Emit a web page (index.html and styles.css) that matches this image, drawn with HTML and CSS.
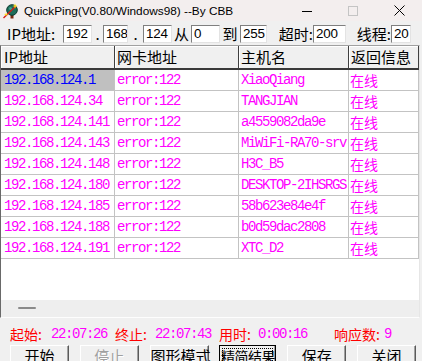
FILE: index.html
```html
<!DOCTYPE html>
<html lang="zh-CN">
<head>
<meta charset="utf-8">
<title>QuickPing</title>
<link rel="stylesheet" href="styles.css">
</head>
<body>
<div class="window">
  <div class="titlebar">
    <svg class="app-icon" viewBox="0 0 16 16" aria-hidden="true">
      <rect x="8.5" y="10" width="3" height="5.5" fill="#7a2a12"/>
      <circle cx="10" cy="7" r="5.3" fill="#1e6d5a" stroke="#0c3a30" stroke-width="1"/>
      <circle cx="8.5" cy="5.5" r="1.6" fill="#3fa088"/>
      <line x1="1.5" y1="15" x2="14" y2="3" stroke="#d41a1a" stroke-width="1.4"/>
      <path d="M13 0.5 L13.8 2.6 L16 3 L13.8 3.6 L13 5.8 L12.3 3.6 L10.2 3 L12.3 2.5 Z" fill="#ffe21a"/>
      <path d="M4 9.5 L4.6 11 L6.2 11.4 L4.6 11.9 L4 13.4 L3.5 11.9 L1.9 11.4 L3.5 11 Z" fill="#ffe21a"/>
    </svg>
    <span class="title">QuickPing(V0.80/Windows98) --By CBB</span>
    <div class="caption">
      <span class="cap"><svg width="10" height="10" viewBox="0 0 10 10"><line x1="0" y1="5.5" x2="10" y2="5.5" stroke="#000" stroke-width="1"/></svg></span>
      <span class="cap"><svg width="10" height="10" viewBox="0 0 10 10"><rect x="0.5" y="0.5" width="9" height="9" fill="none" stroke="#c4c4c4" stroke-width="1"/></svg></span>
      <span class="cap"><svg width="11" height="11" viewBox="0 0 11 11"><path d="M0.5 0.5 L10.5 10.5 M10.5 0.5 L0.5 10.5" stroke="#000" stroke-width="1"/></svg></span>
    </div>
  </div>

  <div class="toolbar">
    <span class="lbl">IP地址:</span>
    <span class="field">192</span>
    <span class="lbl center">.</span>
    <span class="field">168</span>
    <span class="lbl center">.</span>
    <span class="field">124</span>
    <span class="lbl center">从</span>
    <span class="field">0</span>
    <span class="lbl center">到</span>
    <span class="field">255</span>
    <span class="lbl right">超时:</span>
    <span class="field">200</span>
    <span class="lbl right">线程:</span>
    <span class="field">20</span>
  </div>

  <div class="list">
    <div class="grid">
      <div class="hcell">IP地址</div>
      <div class="hcell">网卡地址</div>
      <div class="hcell">主机名</div>
      <div class="hcell">返回信息</div>

      <div class="cell mono ip selected">192.168.124.1</div>
      <div class="cell mono">error:122</div>
      <div class="cell mono">XiaoQiang</div>
      <div class="cell cjk">在线</div>

      <div class="cell mono ip">192.168.124.34</div>
      <div class="cell mono">error:122</div>
      <div class="cell mono">TANGJIAN</div>
      <div class="cell cjk">在线</div>

      <div class="cell mono ip">192.168.124.141</div>
      <div class="cell mono">error:122</div>
      <div class="cell mono">a4559082da9e</div>
      <div class="cell cjk">在线</div>

      <div class="cell mono ip">192.168.124.143</div>
      <div class="cell mono">error:122</div>
      <div class="cell mono">MiWiFi-RA70-srv</div>
      <div class="cell cjk">在线</div>

      <div class="cell mono ip">192.168.124.148</div>
      <div class="cell mono">error:122</div>
      <div class="cell mono">H3C_B5</div>
      <div class="cell cjk">在线</div>

      <div class="cell mono ip">192.168.124.180</div>
      <div class="cell mono">error:122</div>
      <div class="cell mono">DESKTOP-2IHSRGS</div>
      <div class="cell cjk">在线</div>

      <div class="cell mono ip">192.168.124.185</div>
      <div class="cell mono">error:122</div>
      <div class="cell mono">58b623e84e4f</div>
      <div class="cell cjk">在线</div>

      <div class="cell mono ip">192.168.124.188</div>
      <div class="cell mono">error:122</div>
      <div class="cell mono">b0d59dac2808</div>
      <div class="cell cjk">在线</div>

      <div class="cell mono ip">192.168.124.191</div>
      <div class="cell mono">error:122</div>
      <div class="cell mono">XTC_D2</div>
      <div class="cell cjk">在线</div>
    </div>
    <div class="hscroll"><span class="thumb"></span></div>
  </div>

  <div class="status">
    <span class="s-lab">起始:</span>
    <span class="s-val">22:07:26</span>
    <span class="s-lab">终止:</span>
    <span class="s-val">22:07:43</span>
    <span class="s-lab">用时:</span>
    <span class="s-val">0:00:16</span>
    <span class="s-lab">响应数:</span>
    <span class="s-val">9</span>
  </div>

  <div class="buttons">
    <button class="btn">开始</button>
    <button class="btn disabled">停止</button>
    <button class="btn">图形模式</button>
    <button class="btn focused">精简结果</button>
    <button class="btn">保存</button>
    <button class="btn">关闭</button>
  </div>
</div>
</body>
</html>
```

FILE: styles.css
```css
* { box-sizing: border-box; }

html, body {
  margin: 0;
  padding: 0;
}

body {
  width: 422px;
  height: 361px;
  overflow: hidden;
  background: #f0f0f0;
  font-family: "Noto Sans CJK SC", sans-serif;
  color: #000;
}

.window {
  width: 422px;
  height: 361px;
  display: flex;
  flex-direction: column;
}

/* ---------- title bar ---------- */
.titlebar {
  height: 21px;
  flex: none;
  display: flex;
  align-items: center;
  background: #f3eeee;
}

.app-icon {
  width: 16px;
  height: 16px;
  margin-left: 2px;
  flex: none;
}

.title {
  margin-left: 6px;
  font-family: "Liberation Sans", sans-serif;
  font-size: 11.8px;
  white-space: nowrap;
}

.caption {
  margin-left: auto;
  display: flex;
  height: 21px;
}

.cap {
  width: 46px;
  display: flex;
  align-items: center;
  justify-content: center;
}

/* ---------- toolbar ---------- */
.toolbar {
  height: 24px;
  flex: none;
  padding: 2px 0 0 7px;
  display: grid;
  grid-template-columns: 56px 29px 11px 25px 15px 29px 19px 29px 20px 27px 46px 33px 45px 20px;
  align-items: center;
}

.lbl {
  font-size: 15px;
  line-height: 18px;
  white-space: nowrap;
}

.lbl.center { text-align: center; }
.lbl.right { text-align: right; }

.field {
  height: 18px;
  background: #fff;
  border: 1px solid;
  border-color: #7f7f7f #e3e3e3 #e3e3e3 #7f7f7f;
  font-family: "Liberation Sans", sans-serif;
  font-size: 13.4px;
  letter-spacing: -0.2px;
  line-height: 16px;
  padding-left: 2px;
  white-space: nowrap;
  overflow: hidden;
}

/* ---------- list ---------- */
.list {
  width: 420px;
  height: 273px;
  flex: none;
  border-top: 1px solid #a0a0a0;
  border-left: 1px solid #696969;
  border-right: 1px solid #e6e6e6;
  border-bottom: 1px solid #fdfdfd;
  display: flex;
  flex-direction: column;
}

.grid {
  flex: 1;
  background: #fff;
  display: grid;
  grid-template-columns: 114px 124px 110px 70px;
  grid-auto-rows: 21px;
  grid-template-rows: 24px;
  align-content: start;
}

.hcell {
  height: 24px;
  background: #f0f0f0;
  border-right: 1px solid #404040;
  border-bottom: 2px solid #3a3a3a;
  box-shadow: inset 1px 1px 0 #fff;
  padding-left: 2px;
  font-size: 15px;
  line-height: 22px;
  white-space: nowrap;
  overflow: hidden;
}

.hcell:first-child { padding-left: 3px; }

.cell {
  height: 21px;
  border-right: 1px solid #c3c3c3;
  border-bottom: 1px solid #c3c3c3;
  padding-left: 2px;
  line-height: 20px;
  color: #ff00ff;
  white-space: nowrap;
  overflow: hidden;
}

.mono {
  font-family: "Liberation Mono", monospace;
  font-size: 14px;
  letter-spacing: -1.4px;
}

.cell.ip { padding-left: 3px; }

.cell.cjk {
  font-size: 14px;
  padding-left: 1px;
}

.cell.selected {
  background: #c0c0c0;
  color: #0000ff;
}

.hscroll {
  height: 17px;
  flex: none;
  background: #eeeeee;
  display: flex;
  align-items: flex-start;
  padding: 7px 0 0 17px;
}

.thumb {
  width: 18px;
  height: 2px;
  border-radius: 1px;
  background: #8a8a8a;
}

/* ---------- status ---------- */
.status {
  height: 27px;
  flex: none;
  padding: 4px 0 0 10px;
  display: grid;
  grid-template-columns: 41px 64px 40px 64px 39px 76px 50px auto;
  align-items: center;
  font-size: 14px;
  line-height: 16px;
  white-space: nowrap;
}

.s-lab { color: #ff0000; }

.s-val {
  color: #ff00ff;
  font-family: "Liberation Mono", monospace;
  letter-spacing: -1.4px;
}

/* ---------- buttons ---------- */
.buttons {
  flex: none;
  padding: 0 6px 0 10px;
  display: flex;
  justify-content: space-between;
}

.btn {
  width: 59px;
  height: 21px;
  margin: 0;
  padding: 0;
  background: #f0f0f0;
  border: 1px solid;
  border-color: #ffffff #5a5a5a #5a5a5a #ffffff;
  box-shadow: inset -1px -1px 0 #a0a0a0;
  font-family: "Noto Sans CJK SC", sans-serif;
  font-size: 15px;
  line-height: 16px;
  color: #000;
  white-space: nowrap;
}

.btn.disabled {
  color: #a0a0a0;
  text-shadow: 1px 1px 0 #fff;
}

.btn.focused {
  width: 57px;
  border-color: #000;
  outline: 1px dotted #000;
  outline-offset: -4px;
  font-size: 14px;
  letter-spacing: -0.5px;
}
```
